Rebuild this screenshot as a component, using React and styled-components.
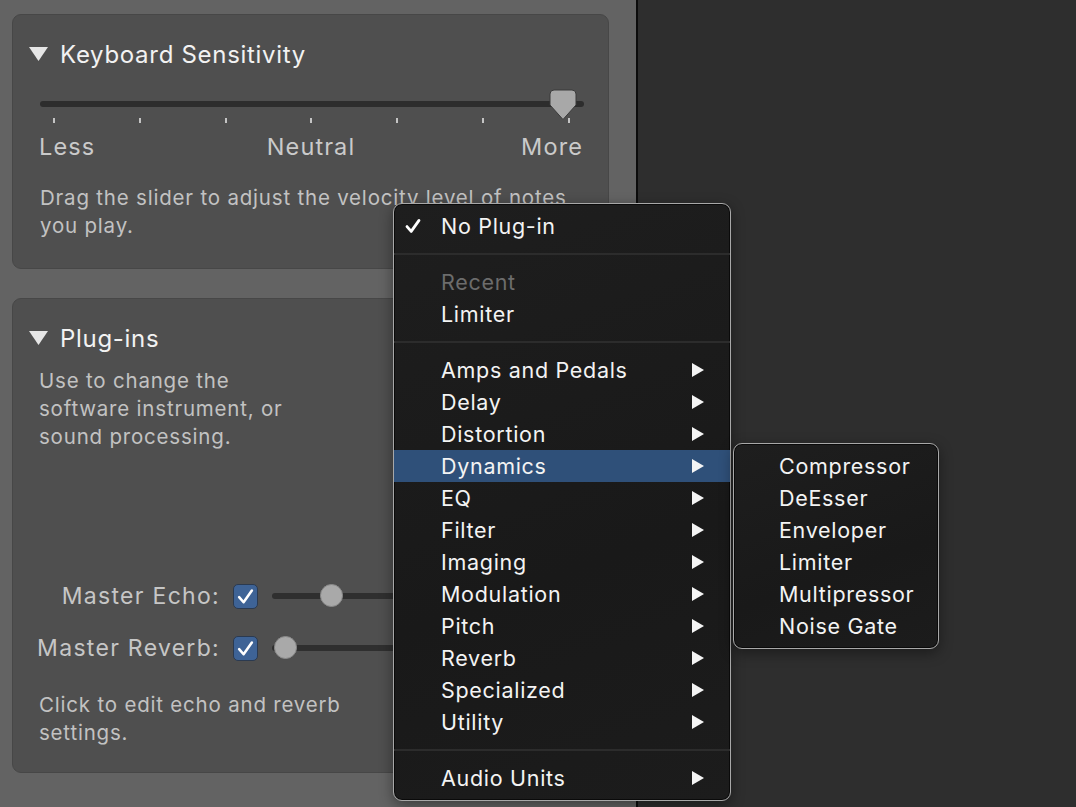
import React from 'react';
import styled, { createGlobalStyle } from 'styled-components';

const GlobalStyle = createGlobalStyle`
  html, body {
    margin: 0;
    padding: 0;
    background: #2e2e2e;
  }
  body {
    font-family: Inter, "Noto Sans", "Liberation Sans", sans-serif;
    -webkit-font-smoothing: antialiased;
  }
`;

const categories = [
  'Amps and Pedals',
  'Delay',
  'Distortion',
  'Dynamics',
  'EQ',
  'Filter',
  'Imaging',
  'Modulation',
  'Pitch',
  'Reverb',
  'Specialized',
  'Utility',
];

const dynamics = ['Compressor', 'DeEsser', 'Enveloper', 'Limiter', 'Multipressor', 'Noise Gate'];

function Disclosure() {
  return (
    <svg width="19" height="14" viewBox="0 0 19 14">
      <polygon points="0,0 19,0 9.5,14" fill="#e6e6e6" />
    </svg>
  );
}

function Arrow() {
  return (
    <svg width="12" height="14" viewBox="0 0 12 14">
      <polygon points="0,0 12,7 0,14" fill="#f4f4f4" />
    </svg>
  );
}

function Check({ size = 16, width = 2.6 }) {
  return (
    <svg width={size} height={size} viewBox="0 0 16 16">
      <path d="M2 8.6 L6.2 13.4 L14 2.4" fill="none" stroke="#fff" strokeWidth={width} strokeLinecap="round" strokeLinejoin="round" />
    </svg>
  );
}

export default function App() {
  return (
    <Screen>
      <GlobalStyle />
      <Sidebar>
        <Panel $height={255}>
          <PanelHeader>
            <Disclosure />
            <span>Keyboard Sensitivity</span>
          </PanelHeader>
          <Sensitivity>
            <Track />
            <Ticks>
              {Array.from({ length: 7 }).map((_, i) => (
                <Tick key={i} />
              ))}
            </Ticks>
            <PointerThumb>
              <svg width="28" height="32" viewBox="0 0 28 32">
                <path
                  d="M5 1 H23 Q27 1 27 5 V16 L14 30.5 L1 16 V5 Q1 1 5 1 Z"
                  fill="#a8a8a8"
                  stroke="#3a3a3a"
                  strokeWidth="1"
                />
              </svg>
            </PointerThumb>
          </Sensitivity>
          <ScaleLabels>
            <ScaleLabel>Less</ScaleLabel>
            <ScaleLabel $align="center">Neutral</ScaleLabel>
            <ScaleLabel $align="right">More</ScaleLabel>
          </ScaleLabels>
          <Description $top={23} $left={27}>
            Drag the slider to adjust the velocity level of notes
            <br />
            you play.
          </Description>
        </Panel>

        <Panel $height={475}>
          <PanelHeader>
            <Disclosure />
            <span>Plug-ins</span>
          </PanelHeader>
          <Description $top={15} $left={26}>
            Use to change the
            <br />
            software instrument, or
            <br />
            sound processing.
          </Description>
          <MasterRows>
            <MasterRow>
              <MasterLabel>Master Echo:</MasterLabel>
              <CheckBox>
                <Check size={17} width={2.4} />
              </CheckBox>
              <MiniSlider>
                <MiniTrack />
                <RoundThumb $pos={48} />
              </MiniSlider>
            </MasterRow>
            <MasterRow>
              <MasterLabel>Master Reverb:</MasterLabel>
              <CheckBox>
                <Check size={17} width={2.4} />
              </CheckBox>
              <MiniSlider>
                <MiniTrack />
                <RoundThumb $pos={2} />
              </MiniSlider>
            </MasterRow>
          </MasterRows>
          <Description $top={23} $left={26}>
            Click to edit echo and reverb
            <br />
            settings.
          </Description>
        </Panel>
      </Sidebar>
      <Divider />
      <Workspace />

      <Menu>
        <MenuItem>
          <CheckSlot>
            <Check size={16} width={2.8} />
          </CheckSlot>
          <ItemLabel>No Plug-in</ItemLabel>
        </MenuItem>
        <Separator />
        <MenuItem $muted>
          <CheckSlot />
          <ItemLabel>Recent</ItemLabel>
        </MenuItem>
        <MenuItem>
          <CheckSlot />
          <ItemLabel>Limiter</ItemLabel>
        </MenuItem>
        <Separator />
        {categories.map((c) => (
          <MenuItem key={c} $active={c === 'Dynamics'}>
            <CheckSlot />
            <ItemLabel>{c}</ItemLabel>
            <Arrow />
          </MenuItem>
        ))}
        <Separator />
        <MenuItem>
          <CheckSlot />
          <ItemLabel>Audio Units</ItemLabel>
          <Arrow />
        </MenuItem>
      </Menu>

      <SubMenu>
        {dynamics.map((d) => (
          <SubItem key={d}>{d}</SubItem>
        ))}
      </SubMenu>
    </Screen>
  );
}

const Screen = styled.div`
  position: relative;
  display: flex;
  width: 1076px;
  height: 807px;
  overflow: hidden;
  background: #2e2e2e;
`;

const Sidebar = styled.div`
  width: 636px;
  flex-shrink: 0;
  box-sizing: border-box;
  padding: 14px 27px 0 12px;
  display: flex;
  flex-direction: column;
  gap: 29px;
  background: #636363;
`;

const Divider = styled.div`
  width: 2px;
  background: #0c0c0c;
`;

const Workspace = styled.div`
  flex: 1;
  background: #2e2e2e;
`;

const Panel = styled.section`
  height: ${(p) => p.$height}px;
  box-sizing: border-box;
  display: flex;
  flex-direction: column;
  background: #4f4f4f;
  border: 1px solid #474747;
  border-radius: 9px;
  padding-top: 25px;
`;

const PanelHeader = styled.div`
  display: flex;
  align-items: center;
  gap: 12px;
  height: 28px;
  padding-left: 16px;
  color: #f2f2f2;
  font-size: 24px;
  letter-spacing: 0.7px;
`;

const Sensitivity = styled.div`
  position: relative;
  height: 34px;
  margin: 22px 24px 0 27px;
`;

const Track = styled.div`
  position: absolute;
  left: 0;
  right: 0;
  top: 11px;
  height: 6px;
  border-radius: 3px;
  background: #2d2d2d;
`;

const Ticks = styled.div`
  position: absolute;
  left: 0;
  right: 0;
  top: 28px;
  display: flex;
  justify-content: space-between;
  padding: 0 14px 0 13px;
`;

const Tick = styled.div`
  width: 2px;
  height: 5px;
  background: #c4c4c4;
`;

const PointerThumb = styled.div`
  position: absolute;
  left: 509px;
  top: -1px;
  line-height: 0;
`;

const ScaleLabels = styled.div`
  display: grid;
  grid-template-columns: 1fr auto 1fr;
  margin: 9px 25px 0 26px;
  height: 28px;
  line-height: 28px;
  color: #cacaca;
  font-size: 23.5px;
  letter-spacing: 1.1px;
`;

const ScaleLabel = styled.span`
  text-align: ${(p) => p.$align || 'left'};
`;

const Description = styled.p`
  margin: ${(p) => p.$top}px 0 0 ${(p) => p.$left}px;
  color: #c2c2c2;
  font-size: 20.5px;
  line-height: 28px;
  letter-spacing: 0.8px;
`;

const MasterRows = styled.div`
  display: flex;
  flex-direction: column;
  gap: 12px;
  margin-top: 125px;
`;

const MasterRow = styled.div`
  display: grid;
  grid-template-columns: 206px 25px 1fr;
  column-gap: 14px;
  align-items: center;
  height: 40px;
  padding-right: 20px;
`;

const MasterLabel = styled.span`
  text-align: right;
  color: #c6c6c6;
  font-size: 23px;
  letter-spacing: 1.3px;
  margin-right: -1px;
`;

const CheckBox = styled.div`
  width: 25px;
  height: 25px;
  box-sizing: border-box;
  border-radius: 5px;
  background: #3e6396;
  border: 1px solid #2b3a50;
  display: flex;
  align-items: center;
  justify-content: center;
`;

const MiniSlider = styled.div`
  position: relative;
  height: 24px;
`;

const MiniTrack = styled.div`
  position: absolute;
  left: 0;
  right: 0;
  top: 9px;
  height: 6px;
  border-radius: 3px;
  background: #2f2f2f;
`;

const RoundThumb = styled.div`
  position: absolute;
  top: 0;
  left: ${(p) => p.$pos}px;
  width: 23px;
  height: 23px;
  box-sizing: border-box;
  border-radius: 50%;
  background: #a9a9a9;
  border: 1px solid #8a8a8a;
`;

const Menu = styled.div`
  position: absolute;
  left: 393px;
  top: 203px;
  width: 338px;
  height: 598px;
  box-sizing: border-box;
  padding: 6px 0;
  border: 1.5px solid #a8a8a8;
  border-radius: 9px;
  background: linear-gradient(160deg, #1e1e1e, #191919 60%, #1c1c1c);
  box-shadow: inset 0 0 0 1px #0a0a0a, 0 4px 14px rgba(0, 0, 0, 0.4);
`;

const MenuItem = styled.div`
  display: flex;
  align-items: center;
  height: 32px;
  padding-right: 26px;
  background: ${(p) => (p.$active ? '#2f5079' : 'transparent')};
  color: ${(p) => (p.$muted ? '#6c6c6c' : '#f3f3f3')};
  font-size: 21.5px;
  letter-spacing: 0.7px;
`;

const CheckSlot = styled.div`
  width: 47px;
  flex-shrink: 0;
  box-sizing: border-box;
  padding-left: 11px;
  line-height: 0;
`;

const ItemLabel = styled.span`
  flex: 1;
`;

const Separator = styled.div`
  height: 24px;
  display: flex;
  align-items: center;
  &::after {
    content: '';
    flex: 1;
    height: 2px;
    background: #2c2c2c;
  }
`;

const SubMenu = styled.div`
  position: absolute;
  left: 733px;
  top: 443px;
  width: 206px;
  height: 206px;
  box-sizing: border-box;
  padding: 6px 0;
  border: 1.5px solid #a8a8a8;
  border-radius: 9px;
  background: linear-gradient(160deg, #1e1e1e, #191919 60%, #1c1c1c);
  box-shadow: inset 0 0 0 1px #0a0a0a, 0 4px 14px rgba(0, 0, 0, 0.4);
`;

const SubItem = styled.div`
  height: 32px;
  line-height: 32px;
  padding-left: 45px;
  color: #f3f3f3;
  font-size: 21.5px;
  letter-spacing: 0.7px;
`;
